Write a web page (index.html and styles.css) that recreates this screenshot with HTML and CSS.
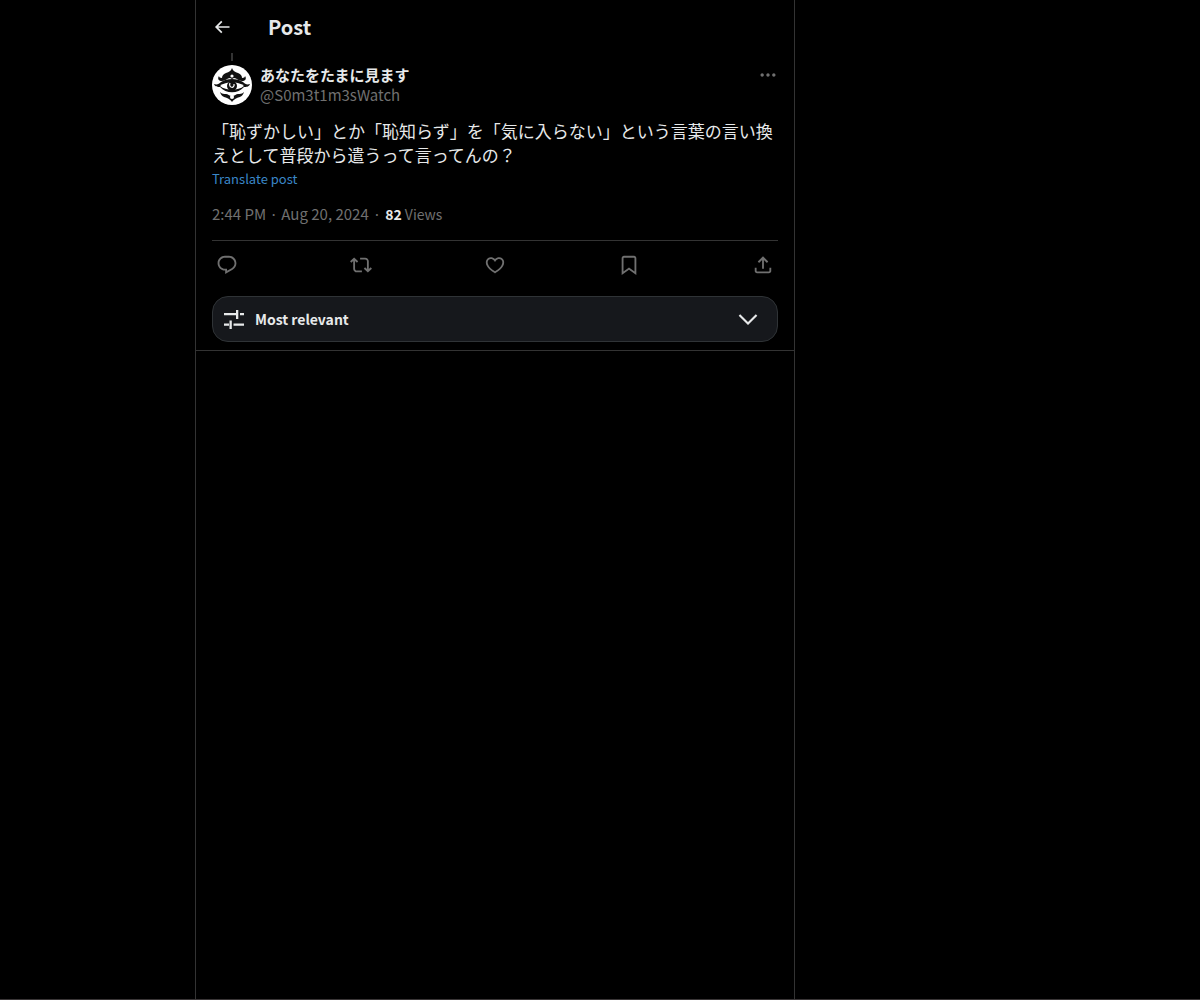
FILE: index.html
```
<!DOCTYPE html>
<html lang="en">
<head>
  <meta charset="utf-8">
  <title>Post</title>
  <link rel="stylesheet" href="styles.css">
</head>
<body>

<main class="column">

  <header class="topbar">
    <button class="icon-button back" aria-label="Back">
      <svg viewBox="0 0 24 24"><path d="M7.414 13l5.043 5.04-1.414 1.42L3.586 12l7.457-7.46 1.414 1.42L7.414 11H21v2H7.414z"/></svg>
    </button>
    <h1>Post</h1>
  </header>

  <article class="post">
    <div class="thread-line"></div>

    <div class="author">
      <svg class="avatar" viewBox="0 0 40 40">
        <circle cx="20" cy="20" r="20" fill="#fff"/>
        <path d="M20 3c1 3 3 4 6 5 3 1 4 3 4 5 2 0 3-1 3-2 2 3 0 5-3 5-4 0-5-3-8-3-1 0-1 1-2 1s-1-1-2-1c-3 0-4 3-8 3-3 0-5-2-3-5 0 1 1 2 3 2 0-2 1-4 4-5 3-1 5-2 6-5z"/>
        <path d="M20 37c-1-2-3-3-5-4-3-1-6-2-7-6 2 2 4 2 6 2 2 0 3 2 6 2s4-2 6-2c2 0 4 0 6-2-1 4-4 5-7 6-2 1-4 2-5 4z"/>
        <path d="M2 19c3 1 5 0 7-2 6-4 16-4 22 0 2 2 4 3 7 2-1 3-4 3-6 3-6 7-18 7-24 0-2 0-5 0-6-3z"/>
        <path d="M8 21c6-5 18-5 24 0-6 5-18 5-24 0z" fill="#fff"/>
        <circle cx="20" cy="21" r="5"/>
        <path d="M18 18c-2 5 5 6 4 1" fill="none" stroke="#fff" stroke-width="1.2"/>
        <circle cx="20" cy="11" r="1.600" fill="#fff"/>
        <circle cx="20" cy="32" r="2" fill="#fff"/>
      </svg>
      <div class="names">
        <a class="name" href="#">あなたをたまに見ます</a>
        <a class="handle" href="#">@S0m3t1m3sWatch</a>
      </div>
      <button class="icon-button more" aria-label="More">
        <svg viewBox="0 0 24 24"><path d="M3 12c0-1.100.9-2 2-2s2 .9 2 2-.9 2-2 2-2-.9-2-2zm9 2c1.100 0 2-.9 2-2s-.9-2-2-2-2 .9-2 2 .9 2 2 2zm7 0c1.100 0 2-.9 2-2s-.9-2-2-2-2 .9-2 2 .9 2 2 2z"/></svg>
      </button>
    </div>

    <p class="text" lang="ja">「恥ずかしい」とか「恥知らず」を「気に入らない」という言葉の言い換えとして普段から遣うって言ってんの？</p>
    <button class="translate">Translate post</button>

    <div class="meta">
      <a href="#">2:44 PM · Aug 20, 2024</a><span class="dot">·</span><a class="views" href="#"><strong>82</strong> Views</a>
    </div>

    <div class="actions">
      <button class="icon-button" aria-label="Reply">
        <svg viewBox="0 0 24 24"><path d="M1.751 10c0-4.420 3.584-8 8.005-8h4.366c4.490 0 8.129 3.640 8.129 8.130 0 2.960-1.607 5.680-4.196 7.110l-8.054 4.460v-3.690h-.067c-4.490.1-8.183-3.510-8.183-8.010zm8.005-6c-3.317 0-6.005 2.690-6.005 6 0 3.370 2.770 6.080 6.138 6.010l.351-.01h1.761v2.300l5.087-2.810c1.951-1.080 3.163-3.130 3.163-5.360 0-3.390-2.744-6.130-6.129-6.130H9.756z"/></svg>
      </button>
      <button class="icon-button" aria-label="Repost">
        <svg viewBox="0 0 24 24"><path d="M4.500 3.880l4.432 4.140-1.364 1.460L5.500 7.550V16c0 1.100.896 2 2 2H13v2H7.500c-2.209 0-4-1.790-4-4V7.550L1.432 9.480.068 8.020 4.500 3.880zM16.500 6H11V4h5.500c2.209 0 4 1.790 4 4v8.450l2.068-1.930 1.364 1.460-4.432 4.140-4.432-4.140 1.364-1.460 2.068 1.930V8c0-1.100-.896-2-2-2z"/></svg>
      </button>
      <button class="icon-button" aria-label="Like">
        <svg viewBox="0 0 24 24"><path d="M16.697 5.500c-1.222-.06-2.679.51-3.890 2.160l-.805 1.090-.806-1.090C9.984 6.010 8.526 5.440 7.304 5.500c-1.243.07-2.349.78-2.910 1.910-.552 1.120-.633 2.780.479 4.820 1.074 1.970 3.257 4.270 7.129 6.610 3.870-2.340 6.052-4.640 7.126-6.610 1.111-2.040 1.030-3.700.477-4.820-.561-1.130-1.666-1.840-2.908-1.910zm4.187 7.690c-1.351 2.480-4.001 5.120-8.379 7.670l-.503.3-.504-.3c-4.379-2.550-7.029-5.190-8.382-7.670-1.360-2.500-1.410-4.860-.514-6.670.887-1.790 2.647-2.910 4.601-3.010 1.651-.09 3.368.56 4.798 2.010 1.429-1.450 3.146-2.100 4.796-2.010 1.954.1 3.714 1.220 4.601 3.010.896 1.810.846 4.170-.514 6.670z"/></svg>
      </button>
      <button class="icon-button" aria-label="Bookmark">
        <svg viewBox="0 0 24 24"><path d="M4 4.500C4 3.120 5.119 2 6.500 2h11C18.881 2 20 3.120 20 4.500v18.440l-8-5.710-8 5.710V4.500zM6.500 4c-.276 0-.5.22-.5.5v14.560l6-4.290 6 4.290V4.500c0-.28-.224-.5-.5-.5h-11z"/></svg>
      </button>
      <button class="icon-button" aria-label="Share">
        <svg viewBox="0 0 24 24"><path d="M12 2.590l5.700 5.700-1.410 1.420L13 6.410V16h-2V6.410l-3.300 3.300-1.410-1.420L12 2.590zM21 15l-.02 3.510c0 1.380-1.120 2.490-2.500 2.490H5.500C4.110 21 3 19.880 3 18.500V15h2v3.500c0 .28.220.5.5.5h12.980c.28 0 .5-.22.5-.5L19 15h2z"/></svg>
      </button>
    </div>

    <button class="sort">
      <svg viewBox="0 0 22 22"><path d="M1 5h12v2.300H1zM13 2h2.300v9H13zM17 5h4v2.300h-4zM1 15.500h5v2.300H1zM6.500 12.500h2.300V21H6.500zM10.500 15.500H21v2.300H10.500z"/></svg>
      <span>Most relevant</span>
      <svg class="chevron" viewBox="0 0 24 24"><path d="M2.700 8.700l1.500-1.500L12 15l7.800-7.800 1.500 1.500L12 18z"/></svg>
    </button>
  </article>

</main>

</body>
</html>
```
FILE: styles.css
```
* {
  box-sizing: border-box;
}

body {
  margin: 0;
  border-bottom: 1px solid #3a3637;
  background: #000;
  color: #e7e9ea;
  font-family: "Noto Sans CJK JP", sans-serif;
  font-size: 15px;
  line-height: 20px;
}

a {
  color: inherit;
  text-decoration: none;
}

button {
  padding: 0;
  border: 0;
  background: none;
  color: inherit;
  font: inherit;
  cursor: pointer;
}

svg {
  display: block;
  flex: none;
  fill: currentColor;
}

.column {
  max-width: 600px;
  min-height: calc(100vh - 1px);
  margin-left: 195px;
  border: solid #333;
  border-width: 0 1px;
}

.topbar {
  display: flex;
  align-items: center;
  gap: 36px;
  height: 53px;
  padding: 0 16px;
}

.topbar h1 {
  margin: 0;
  font-size: 20px;
  line-height: 24px;
}

.icon-button svg {
  width: 20px;
  height: 20px;
}

.post {
  padding: 0 16px 8px;
  border-bottom: 1px solid #333;
}

.thread-line {
  width: 2px;
  height: 8px;
  margin: 0 0 4px 19px;
  background: #333;
}

.author {
  display: flex;
  align-items: flex-start;
  gap: 8px;
}

.avatar {
  width: 40px;
  height: 40px;
  fill: #111;
}

.names {
  display: flex;
  flex: 1;
  flex-direction: column;
}

.name {
  font-weight: bold;
}

.handle,
.more,
.meta,
.actions {
  color: #707070;
}

.text {
  margin: 14px 0 0;
  font-size: 17px;
  line-height: 24px;
}

.translate {
  display: block;
  color: #3a87c8;
  font-size: 13px;
  line-height: 24px;
}

.meta {
  margin: 13px 0 16px;
}

.meta .dot {
  padding: 0 4px;
}

.meta .views {
  font-size: 14px;
}

.meta strong {
  color: #e7e9ea;
}

.actions {
  display: flex;
  justify-content: space-between;
  height: 48px;
  padding: 0 4px;
  border-top: 1px solid #333;
}

.actions svg {
  width: 22px;
  height: 22px;
}

.sort {
  display: flex;
  align-items: center;
  gap: 10px;
  width: 100%;
  height: 46px;
  margin-top: 8px;
  padding: 0 17px 0 10px;
  border: 1px solid #2f3336;
  border-radius: 16px;
  background: #16181c;
  font-size: 14px;
  font-weight: bold;
}

.sort svg {
  width: 22px;
  height: 22px;
}

.sort .chevron {
  width: 24px;
  height: 24px;
  margin-left: auto;
}
```
